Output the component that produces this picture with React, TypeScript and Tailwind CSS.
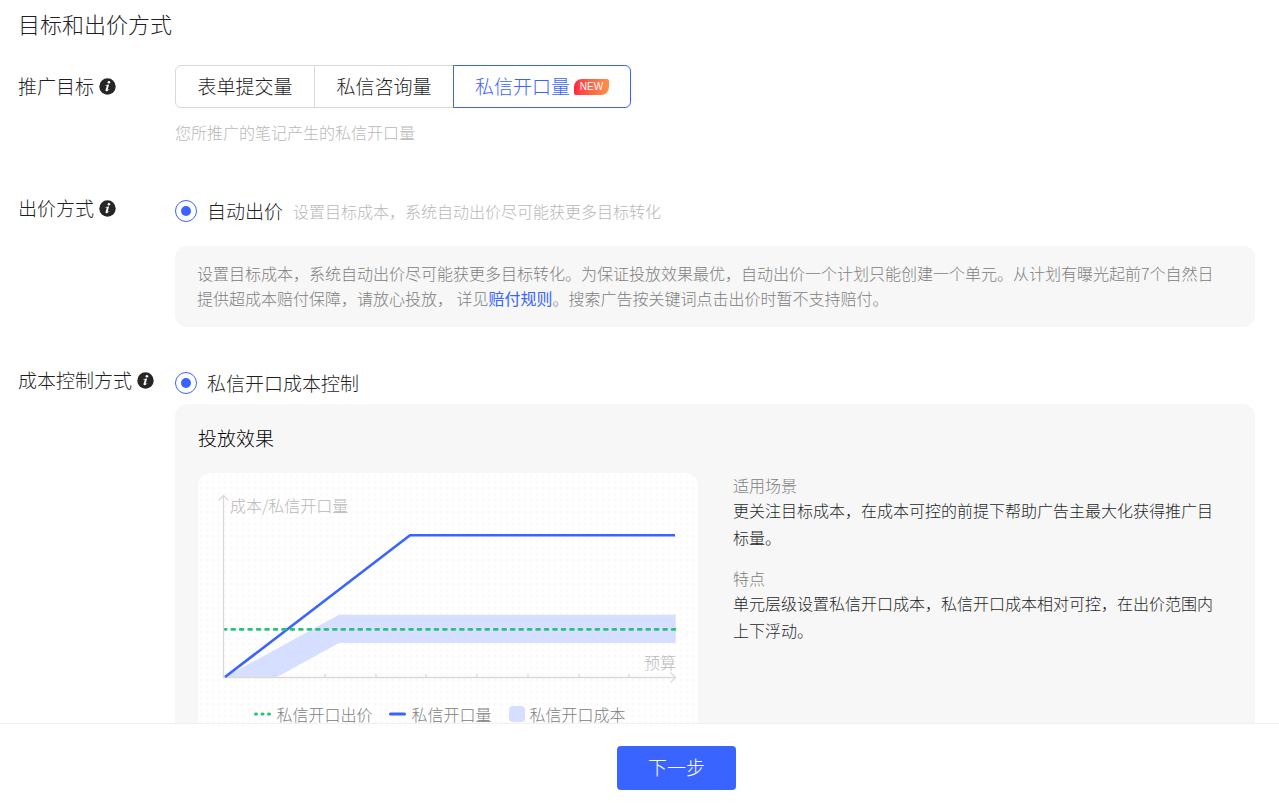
import { useState, type ReactNode } from 'react';

const goals = [
  { key: 'form', label: '表单提交量' },
  { key: 'consult', label: '私信咨询量' },
  { key: 'open', label: '私信开口量', isNew: true },
];

const ticks = [76, 127, 178, 228, 279, 330, 381, 431];

function InfoIcon() {
  return (
    <svg width="17" height="17" viewBox="0 0 17 17" aria-hidden="true">
      <circle cx="8.5" cy="8.5" r="8.2" fill="#262626" />
      <circle cx="9.9" cy="4.2" r="1.3" fill="#fff" />
      <path
        d="M6.4 6.9L10.1 6.5L8.7 11.4C8.6 11.9 8.9 11.9 10.1 10.9L10.4 11.3C9.2 12.7 8.2 13.3 7.3 13.2C6.6 13.1 6.4 12.6 6.6 11.8L7.8 7.8C7.9 7.4 7.6 7.4 6.3 7.4Z"
        fill="#fff"
      />
    </svg>
  );
}

function FormRow({ label, children }: { label: string; children: ReactNode }) {
  return (
    <section className="flex">
      <div className="flex h-[43px] w-[157px] shrink-0 items-center gap-[5px] text-[19px]">
        <span>{label}</span>
        <InfoIcon />
      </div>
      <div className="min-w-0 flex-1">{children}</div>
    </section>
  );
}

function RadioOption({ name, label, hint }: { name: string; label: string; hint?: string }) {
  return (
    <label className="flex h-11 items-center pt-1">
      <input
        type="radio"
        name={name}
        defaultChecked
        className="mr-2.5 size-[22px] shrink-0 appearance-none rounded-full border border-[#3a64ff] bg-clip-content p-[5px] checked:bg-[#3a64ff]"
      />
      <span className="text-[19px]">{label}</span>
      {hint && <span className="ml-2.5 text-base text-[#b8b8b8]">{hint}</span>}
    </label>
  );
}

function EffectChart() {
  return (
    <figure className="w-[500px] shrink-0 rounded-xl bg-white bg-[radial-gradient(#fafafa_1px,transparent_2px)] bg-[size:6px_6px] pb-6">
      <svg width="500" height="228" viewBox="0 0 500 228" fill="none">
        <path d="M27 204L141 141.7H477.7V170H141L79 204Z" fill="#d6dfff" />
        <g stroke="#d9d9d9" strokeWidth="1.3">
          <path d="M25.5 23V204.5H477" />
          <path d="M20.5 27.5L25.5 22.5L30.5 27.5M472.5 199.5L477.5 204.5L472.5 209.5" />
          {ticks.map((x) => (
            <path key={x} d={`M${x} 201V204`} />
          ))}
        </g>
        <path d="M27 204L212 62.2H477" stroke="#3a64ff" strokeWidth="2.6" />
        <path
          d="M27.2 156.4H477"
          stroke="#27c27b"
          strokeWidth="2.6"
          strokeLinecap="round"
          strokeDasharray="3 5.47"
          strokeDashoffset="2"
        />
        <text x="32" y="39" fontSize="16" fill="#b8b8b8">成本/私信开口量</text>
        <text x="478" y="196" fontSize="16" fill="#b8b8b8" textAnchor="end">预算</text>
      </svg>
      <figcaption className="flex h-[26px] items-center justify-center gap-[17px] pr-4 text-base text-[#808080]">
        <span className="flex items-center gap-[5px]">
          <svg width="17" height="4" viewBox="0 0 17 4">
            <path d="M1.5 2H15.5" stroke="#27c27b" strokeWidth="3" strokeLinecap="round" strokeDasharray="1 5.5" />
          </svg>
          私信开口出价
        </span>
        <span className="flex items-center gap-[5px]">
          <svg width="17" height="4" viewBox="0 0 17 4">
            <path d="M1.5 2H15.5" stroke="#3a64ff" strokeWidth="3" strokeLinecap="round" />
          </svg>
          私信开口量
        </span>
        <span className="flex items-center gap-[5px]">
          <i className="size-4 rounded-sm bg-[#d6dfff]" />
          私信开口成本
        </span>
      </figcaption>
    </figure>
  );
}

export default function App() {
  const [goal, setGoal] = useState('open');

  return (
    <div className="flex h-screen flex-col bg-white font-['Noto_Sans_CJK_SC',sans-serif] font-light text-[#1f1f1f]">
      <main className="min-h-0 flex-1 overflow-y-auto pr-6 pl-[18px] [scrollbar-width:none]">
        <h1 className="flex h-[46px] items-center text-[22px]">目标和出价方式</h1>

        <div className="pt-[19px]">
          <FormRow label="推广目标">
            <div className="flex">
              {goals.map((item) => (
                <button
                  key={item.key}
                  type="button"
                  aria-pressed={goal === item.key}
                  onClick={() => setGoal(item.key)}
                  className="-ml-px flex h-[43px] min-w-[140px] items-center justify-center gap-1 border border-[#d9d9d9] px-[21px] text-[19px] first:ml-0 first:rounded-l-md last:rounded-r-md aria-pressed:z-10 aria-pressed:border-[#3a64ff] aria-pressed:text-[#3a64ff]"
                >
                  {item.label}
                  {item.isNew && (
                    <span className="flex h-4 w-[35px] items-center justify-center rounded-tl-lg rounded-tr-xs rounded-br-lg rounded-bl-xs bg-linear-to-r from-[#ff2442] to-[#ff8f4a] font-['Liberation_Sans',sans-serif] text-[10px] font-normal text-white">
                      NEW
                    </span>
                  )}
                </button>
              ))}
            </div>
            <p className="pt-[11px] text-base leading-[26px] text-[#b8b8b8]">您所推广的笔记产生的私信开口量</p>
          </FormRow>
        </div>

        <div className="pt-[42px]">
          <FormRow label="出价方式">
            <RadioOption name="bid" label="自动出价" hint="设置目标成本，系统自动出价尽可能获更多目标转化" />
            <p className="mt-[15px] rounded-xl bg-[#f7f7f7] pt-[15px] pr-8 pb-4 pl-[22px] text-base leading-[25px] text-[#808080]">
              设置目标成本，系统自动出价尽可能获更多目标转化。为保证投放效果最优，自动出价一个计划只能创建一个单元。从计划有曝光起前7个自然日提供超成本赔付保障，请放心投放， 详见
              <a href="#rules" className="font-normal text-[#3a64ff]">赔付规则</a>
              。搜索广告按关键词点击出价时暂不支持赔付。
            </p>
          </FormRow>
        </div>

        <div className="pt-8">
          <FormRow label="成本控制方式">
            <RadioOption name="cost" label="私信开口成本控制" />
            <div className="mt-px rounded-xl bg-[#f7f7f7] pt-5 pr-10 pb-6 pl-[23px]">
              <h2 className="text-[19px] leading-7 text-black">投放效果</h2>
              <div className="mt-[21px] flex gap-[35px]">
                <EffectChart />
                <dl className="text-base leading-[27px]">
                  <dt className="leading-6 text-[#808080]">适用场景</dt>
                  <dd className="mb-[15px]">更关注目标成本，在成本可控的前提下帮助广告主最大化获得推广目标量。</dd>
                  <dt className="leading-6 text-[#808080]">特点</dt>
                  <dd>单元层级设置私信开口成本，私信开口成本相对可控，在出价范围内上下浮动。</dd>
                </dl>
              </div>
            </div>
          </FormRow>
        </div>
      </main>

      <footer className="flex h-20 shrink-0 items-center justify-center border-t border-[#f0f0f0] bg-white pt-2 pl-[74px]">
        <button type="button" className="h-11 w-[119px] rounded bg-[#3a64ff] text-[19px] text-white">
          下一步
        </button>
      </footer>
    </div>
  );
}
